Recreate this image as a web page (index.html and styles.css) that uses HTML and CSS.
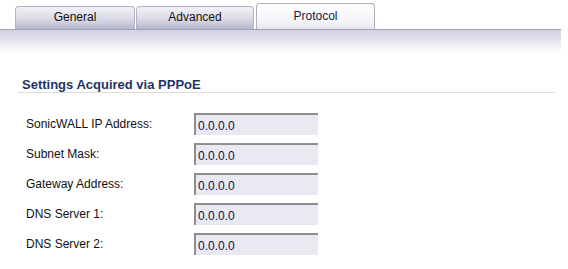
FILE: index.html
```html
<!DOCTYPE html>
<html>

<head>
  <meta charset="utf-8">
  <title>Protocol</title>
  <link rel="stylesheet" href="styles.css">
</head>

<body>
  <div class="tabs">
    <div class="tab general">General</div>
    <div class="tab advanced">Advanced</div>
    <div class="tab active">Protocol</div>
  </div>
  <div class="tabbar"></div>

  <div class="section">
    <h2>Settings Acquired via PPPoE</h2>
    <div class="rows">
      <label class="row"><span>SonicWALL IP Address:</span><input type="text" value="0.0.0.0" readonly></label>
      <label class="row"><span>Subnet Mask:</span><input type="text" value="0.0.0.0" readonly></label>
      <label class="row"><span>Gateway Address:</span><input type="text" value="0.0.0.0" readonly></label>
      <label class="row"><span>DNS Server 1:</span><input type="text" value="0.0.0.0" readonly></label>
      <label class="row"><span>DNS Server 2:</span><input type="text" value="0.0.0.0" readonly></label>
    </div>
  </div>
</body>

</html>
```

FILE: styles.css
```css
body {
  margin: 0;
  padding: 0;
  background: #fff;
  color: #111;
  font-family: "Liberation Sans", Arial, sans-serif;
  font-size: 12px;
}

.tabs {
  display: flex;
  align-items: flex-end;
  gap: 1px;
  padding: 3px 0 0 15px;
  height: 29px;
  box-sizing: border-box;
}

.tab {
  height: 23px;
  box-sizing: border-box;
  border: 1px solid #b4b4c4;
  border-bottom: none;
  border-radius: 4px 4px 0 0;
  background: linear-gradient(#f2f2f6, #d8d8e4 60%, #b4b4cc);
  text-align: center;
  line-height: 21px;
  font-size: 12px;
  color: #111;
}

.tab.general {
  width: 120px;
}

.tab.advanced {
  width: 118px;
}

.tab.active {
  width: 119px;
  height: 26px;
  margin-left: 1px;
  background: linear-gradient(#fff, #f4f4fa 70%, #e4e4ee);
  border-color: #b0b0b8;
  line-height: 24px;
  color: #1a1a40;
}

.tabbar {
  width: 561px;
  height: 24px;
  border-top: 1px solid #a2a2b6;
  background: linear-gradient(#d0d0e2, #fff);
}

.section {
  padding: 24px 13px 0 18px;
}

.section h2 {
  margin: 0;
  padding: 0 0 0 4px;
  font-size: 13px;
  line-height: 14px;
  font-weight: bold;
  color: #1e3466;
  border-bottom: 1px solid #dcdcdc;
}

.rows {
  display: flex;
  flex-direction: column;
  gap: 8px;
  padding: 20px 0 0 8px;
}

.row {
  display: flex;
  align-items: center;
  height: 22px;
}

.row span {
  width: 168px;
  color: #111;
}

.row input {
  width: 124px;
  height: 22px;
  box-sizing: border-box;
  margin: 0;
  padding: 1px 0 0 2px;
  border: 2px solid #8e8e8e;
  border-right: none;
  border-bottom: none;
  background: #e9e9f1;
  font-family: "Liberation Sans", Arial, sans-serif;
  font-size: 12px;
  color: #10104a;
  outline: none;
}
```
